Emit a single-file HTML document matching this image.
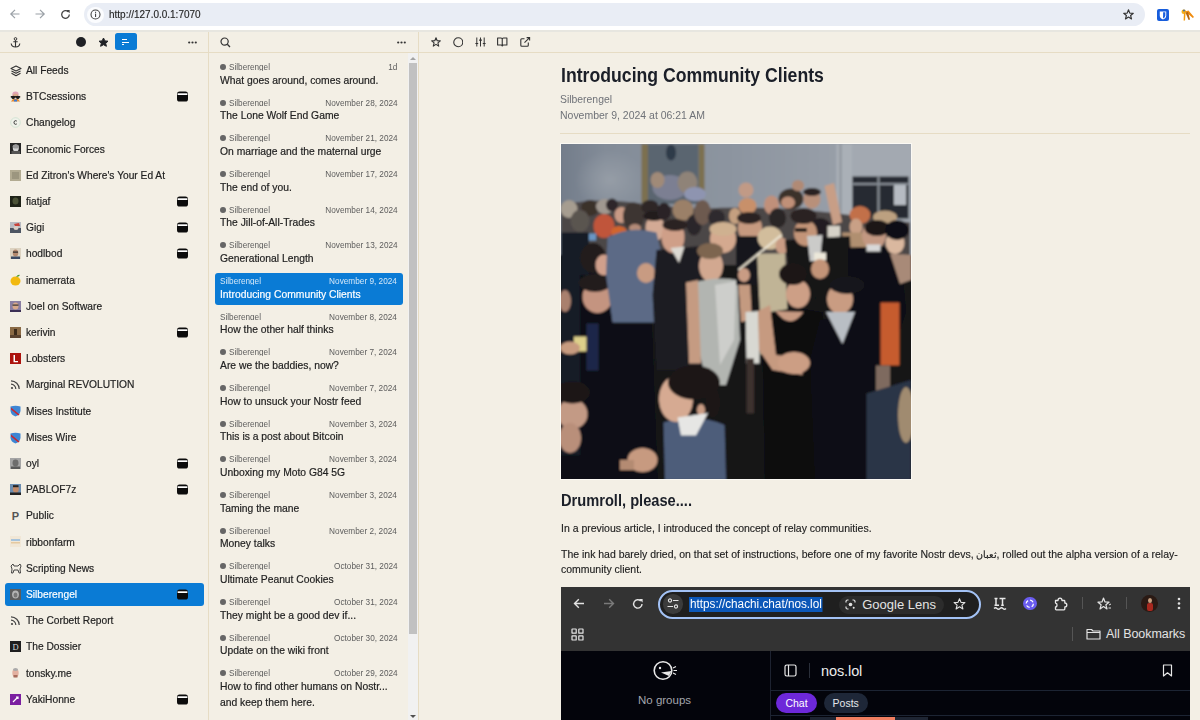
<!DOCTYPE html><html><head><meta charset="utf-8"><style>*{margin:0;padding:0;box-sizing:border-box}
html,body{width:1200px;height:720px;overflow:hidden;background:#f3efe5;font-family:"Liberation Sans",sans-serif}
#chrome{position:absolute;left:0;top:0;width:1200px;height:30px;background:#fff;z-index:5}
#pill{position:absolute;left:83.5px;top:3px;width:1061px;height:23px;border-radius:12px;background:#e9edf5}
#infobg{position:absolute;left:87px;top:6.5px;width:16.5px;height:16.5px;border-radius:50%;background:#fbfcfe}
#url{position:absolute;left:109px;top:7.5px;font-size:10.5px;color:#1f1f1f;-webkit-text-stroke:0.15px #1f1f1f;line-height:13px;white-space:nowrap;transform:scaleX(0.951);transform-origin:0 0}
.ci{position:absolute}
#app{position:absolute;left:0;top:30px;width:1200px;height:690px;background:#f3efe5}
.hline{position:absolute;height:1px;background:#e6dcc4}
.vline{position:absolute;width:1px;background:#e6dcc4}
#side{position:absolute;left:0;top:0;width:208px;height:690px}
.frow{position:absolute;left:5px;width:199px;height:23px;border-radius:3px}
.frow.sel{background:#0a7bd5}
.fic{position:absolute;left:4.5px;top:6px;width:12px;height:12px;line-height:0}
.fname{position:absolute;left:20.5px;top:4.3px;font-size:11.2px;line-height:14px;color:#222;white-space:nowrap;transform:scaleX(0.913);transform-origin:0 0;-webkit-text-stroke:0.2px #222}
.frow.sel .fname{color:#fff;-webkit-text-stroke:0.2px #fff}
.badge{position:absolute;left:172px;top:6px;line-height:0}
#mid{position:absolute;left:209px;top:0;width:209px;height:690px}
.item{position:absolute;left:5.5px;width:188.5px;height:32.5px;border-radius:3px}
.item.sel{background:#0a7bd5}
.dot{position:absolute;left:5.3px;top:5.6px;width:5.8px;height:5.8px;border-radius:50%;background:#666}
.auth{position:absolute;left:14.25px;top:2.5px;height:9.6px;overflow:hidden;font-size:8.5px;line-height:12px;color:#5c5c5c;white-space:nowrap;transform:scaleX(0.964);transform-origin:0 0}
.auth.nd{left:5.25px}
.date{position:absolute;right:5.75px;top:2.5px;font-size:8.5px;line-height:12px;color:#5c5c5c;white-space:nowrap;transform:scaleX(0.97);transform-origin:100% 0}
.ttl{position:absolute;left:5.25px;top:14px;font-size:11px;line-height:15.75px;color:#222;white-space:nowrap;transform:scaleX(0.939);transform-origin:0 0;-webkit-text-stroke:0.2px #222}
.item.sel .auth,.item.sel .date{color:#d5e8f8}
.item.sel .ttl{color:#fff;-webkit-text-stroke:0.2px #fff}
#sb{position:absolute;left:199px;top:23px;width:10px;height:667px;background:#f1f1f1}
#thumb{position:absolute;left:1px;top:10px;width:8px;height:571px;background:#c1c1c1}
#sbup{position:absolute;left:2px;top:4px;width:0;height:0;border-left:3px solid transparent;border-right:3px solid transparent;border-bottom:3px solid #a3a3a3}
#sbdn{position:absolute;left:2px;top:662px;width:0;height:0;border-left:3px solid transparent;border-right:3px solid transparent;border-top:3px solid #505050}
#main{position:absolute;left:419px;top:0;width:781px;height:690px;overflow:hidden}
#atitle{position:absolute;left:141.5px;top:33px;font-size:20px;line-height:24px;font-weight:bold;color:#1b1f28;white-space:nowrap;transform:scaleX(0.883);transform-origin:0 0}
#aauth{position:absolute;left:141px;top:62.3px;font-size:11px;line-height:14px;color:#6f7278;white-space:nowrap;transform:scaleX(0.945);transform-origin:0 0}
#adate{position:absolute;left:141px;top:77.8px;font-size:11px;line-height:14px;color:#6f7278;white-space:nowrap;transform:scaleX(0.952);transform-origin:0 0}
#pframe{position:absolute;left:141px;top:113px;width:352px;height:337px;background:#fbf9f4}
#h2{position:absolute;left:141.5px;top:461px;font-size:16px;line-height:19px;font-weight:bold;color:#1b1f28;white-space:nowrap;transform:scaleX(0.915);transform-origin:0 0}
.para{position:absolute;left:141.5px;font-size:11px;line-height:15.5px;color:#222;white-space:nowrap;transform:scaleX(0.953);transform-origin:0 0;-webkit-text-stroke:0.15px #222}
#shot{position:absolute;left:142px;top:557.3px;width:629px;height:140px;background:#03040b;overflow:hidden}
#stool{position:absolute;left:0;top:0;width:629px;height:63.5px;background:#333333}
#omni{position:absolute;left:97.3px;top:2.5px;width:322.4px;height:29.2px;border-radius:15px;border:2px solid #a3c2f5;background:#1f1f1f}
#urlsel{position:absolute;left:128px;top:9.5px;height:15px;padding:0 1px;background:#0b57b8;color:#fff;font-size:12.5px;line-height:15px;white-space:nowrap;transform:scaleX(0.94);transform-origin:0 0}
#lens{position:absolute;left:277.7px;top:8.4px;width:105.7px;height:18px;border-radius:9px;background:#2c2c2c;color:#e3e3e3}
#lens span{position:absolute;left:23.5px;top:1px;font-size:13px;line-height:16px;white-space:nowrap;transform:scaleX(1.0);transform-origin:0 0}
#allbm{position:absolute;left:545px;top:40px;font-size:12.5px;line-height:15px;color:#e3e3e3;white-space:nowrap;letter-spacing:-0.05px}
#sdark{position:absolute;left:0;top:63.5px;width:629px;height:80px;background:#03040b}
#nogroups{position:absolute;left:77px;top:105.5px;font-size:11.5px;line-height:14px;color:#a3a6ad;white-space:nowrap}
#noslol{position:absolute;left:260px;top:75.5px;font-size:14.5px;line-height:17px;color:#ececec;white-space:nowrap;letter-spacing:-0.1px}
#chat{position:absolute;left:215px;top:106px;width:41px;height:20px;border-radius:10px;background:#6d28d9;color:#fff;font-size:10.5px;line-height:20px;text-align:center}
#posts{position:absolute;left:262.5px;top:106px;width:44.5px;height:20px;border-radius:10px;background:#1e2738;color:#e5e7eb;font-size:10.5px;line-height:20px;text-align:center}

#cline{position:absolute;left:0;top:30px;width:1200px;height:1.5px;background:#e7e6e0}</style></head><body>
<div id="chrome"><div id="cline"></div>
<svg class="ci" style="left:9px;top:8px" width="12" height="12" viewBox="0 0 12 12"><path d="M10.5 6H2 M6 1.8 L1.8 6 L6 10.2" fill="none" stroke="#9aa0a6" stroke-width="1.2"/></svg>
<svg class="ci" style="left:34px;top:8px" width="12" height="12" viewBox="0 0 12 12"><path d="M1.5 6H10 M6 1.8 L10.2 6 L6 10.2" fill="none" stroke="#9aa0a6" stroke-width="1.2"/></svg>
<svg class="ci" style="left:59.5px;top:8.5px" width="11" height="11" viewBox="0 0 11 11"><path d="M9.3 5.5 A3.8 3.8 0 1 1 8.2 2.8" fill="none" stroke="#444" stroke-width="1.3"/><path d="M6.3 1 L9.6 1 L9.6 4.3Z" fill="#444"/></svg>
<div id="pill"></div><div id="infobg"></div>
<svg class="ci" style="left:89.5px;top:9px" width="11" height="11" viewBox="0 0 11 11"><circle cx="5.5" cy="5.5" r="4.5" fill="none" stroke="#444" stroke-width="1.1"/><rect x="5" y="4.6" width="1.1" height="3.4" fill="#444"/><rect x="5" y="2.8" width="1.1" height="1.1" fill="#444"/></svg>
<div id="url">http://127.0.0.1:7070</div>
<svg class="ci" style="left:1122.5px;top:9px" width="11" height="11" viewBox="0 0 11 11"><path d="M5.5 0.8 L6.8 4.1 L10.3 4.3 L7.6 6.5 L8.5 9.9 L5.5 8 L2.5 9.9 L3.4 6.5 L0.7 4.3 L4.2 4.1Z" fill="none" stroke="#333" stroke-width="1.15" stroke-linejoin="round"/></svg>
<svg class="ci" style="left:1157px;top:8.8px" width="12" height="12" viewBox="0 0 13 13"><rect x="0" y="0" width="13" height="13" rx="2.2" fill="#175ddc"/><path d="M3 2.8 H10 V7 Q10 10 6.5 11.5 Q3 10 3 7Z" fill="#fff"/><path d="M6.6 3.6 H9 V7 Q9 9.3 6.6 10.4Z" fill="#175ddc"/></svg>
<svg class="ci" style="left:1181px;top:8.5px" width="14" height="12" viewBox="0 0 14 12"><circle cx="2.8" cy="2.8" r="2.3" fill="#f5b01a"/><path d="M3 3 L2.6 11.5 L4 11.5 L4.5 4Z" fill="#f39a0a"/><path d="M4 2.5 L7.5 1.5 L13 8 L11.8 9 L6 4Z" fill="#f08c10"/><path d="M4.5 3.5 L7 3 L9 10.5 L7.6 11 Z" fill="#b5650d"/><circle cx="3" cy="1.5" r="1.1" fill="#5a7390"/></svg>
</div>

<div id="app">
<div id="side">
<svg class="ci" style="left:9.5px;top:6.5px" width="11" height="11" viewBox="0 0 11 11"><circle cx="5.5" cy="1.9" r="1.3" fill="none" stroke="#333" stroke-width="1"/><path d="M5.5 3.2 V10 M3.3 4.8 H7.7 M1.2 6.5 Q1.5 10 5.5 10 Q9.5 10 9.8 6.5" fill="none" stroke="#333" stroke-width="1.1"/></svg>
<div style="position:absolute;left:76px;top:7px;width:10px;height:10px;border-radius:50%;background:#1f2125"></div>
<svg class="ci" style="left:97.5px;top:7px" width="11" height="10" viewBox="0 0 11 10"><path d="M5.5 1 L6.9 3.9 L10 4.2 L7.7 6.3 L8.4 9.3 L5.5 7.7 L2.6 9.3 L3.3 6.3 L1 4.2 L4.1 3.9Z" fill="#1f2125" stroke="#1f2125" stroke-width="1" stroke-linejoin="round"/></svg>
<div style="position:absolute;left:115px;top:3.3px;width:22px;height:16.7px;border-radius:2.5px;background:#0a7bd5"></div>
<div style="position:absolute;left:121.7px;top:9px;width:5.4px;height:1.1px;background:#fff"></div>
<div style="position:absolute;left:121.7px;top:11.6px;width:7.6px;height:1.1px;background:#fff"></div>
<div style="position:absolute;left:121.7px;top:14.2px;width:2.8px;height:1.1px;background:#fff"></div>
<svg class="ci" style="left:187.5px;top:10.5px" width="9" height="3" viewBox="0 0 9 3"><circle cx="1.2" cy="1.5" r="1.1" fill="#333"/><circle cx="4.5" cy="1.5" r="1.1" fill="#333"/><circle cx="7.8" cy="1.5" r="1.1" fill="#333"/></svg>
<div class="hline" style="left:0;top:21.5px;width:208px"></div>
<div class="vline" style="left:208px;top:0;height:690px"></div>

<div class="frow" style="top:28.70px"><span class="fic"><svg width="12" height="12" viewBox="0 0 12 12"><path d="M6 1 L11 3.5 L6 6 L1 3.5Z M1.5 6 L6 8.3 L10.5 6 M1.5 8.3 L6 10.7 L10.5 8.3" fill="none" stroke="#333" stroke-width="1.1" stroke-linejoin="round"/></svg></span><span class="fname">All Feeds</span></div>
<div class="frow" style="top:54.90px"><span class="fic"><svg width="11" height="11" viewBox="0 0 11 11"><rect width="11" height="11" fill="#f2ede2"/><circle cx="5.5" cy="3.8" r="3.2" fill="#e0a2b8"/><ellipse cx="5.5" cy="5" rx="2.6" ry="2.4" fill="#d9a78a"/><rect x="0.8" y="5" width="9.4" height="1.6" fill="#222"/><circle cx="3.2" cy="6.4" r="1.7" fill="#1b1b1b"/><circle cx="7.8" cy="6.4" r="1.7" fill="#1b1b1b"/><path d="M1 10.5 L3 8 L8 8 L10 10.5Z" fill="#e58a2e"/><rect x="4" y="8.5" width="3" height="2" fill="#3a7bd5"/></svg></span><span class="fname">BTCsessions</span><span class="badge"><svg width="11" height="11" viewBox="0 0 11 11"><rect x="0" y="0.5" width="11" height="10" rx="2.6" fill="#0c0c0c"/><rect x="0.6" y="2.3" width="9.8" height="1.7" fill="#fff"/></svg></span></div>
<div class="frow" style="top:81.10px"><span class="fic"><svg width="11" height="11" viewBox="0 0 11 11"><circle cx="5.5" cy="5.5" r="4.8" fill="#f0f2ea" stroke="#cfe3d3" stroke-width="0.9"/><path d="M6.8 4.2 Q6.2 3.6 5.4 3.7 Q4 3.9 4 5.5 Q4 7.1 5.4 7.3 Q6.2 7.4 6.8 6.8" fill="none" stroke="#333" stroke-width="1"/></svg></span><span class="fname">Changelog</span></div>
<div class="frow" style="top:107.30px"><span class="fic"><svg width="11" height="11" viewBox="0 0 11 11"><rect width="11" height="11" fill="#262626"/><ellipse cx="5.8" cy="5" rx="3" ry="3.6" fill="#d5d5d5"/><ellipse cx="5.8" cy="3.4" rx="3.2" ry="2" fill="#9a9a9a"/><rect x="1.5" y="8" width="8.5" height="3" fill="#555"/></svg></span><span class="fname">Economic Forces</span></div>
<div class="frow" style="top:133.50px"><span class="fic"><svg width="11" height="11" viewBox="0 0 11 11"><rect width="11" height="11" fill="#b2ab92"/><rect x="2" y="2" width="7" height="7" fill="#9c967f"/></svg></span><span class="fname">Ed Zitron's Where's Your Ed At</span></div>
<div class="frow" style="top:159.70px"><span class="fic"><svg width="11" height="11" viewBox="0 0 11 11"><rect width="11" height="11" fill="#1f2318"/><ellipse cx="5.5" cy="5" rx="3" ry="3.5" fill="#4b5237"/></svg></span><span class="fname">fiatjaf</span><span class="badge"><svg width="11" height="11" viewBox="0 0 11 11"><rect x="0" y="0.5" width="11" height="10" rx="2.6" fill="#0c0c0c"/><rect x="0.6" y="2.3" width="9.8" height="1.7" fill="#fff"/></svg></span></div>
<div class="frow" style="top:185.90px"><span class="fic"><svg width="11" height="11" viewBox="0 0 11 11"><rect width="11" height="11" fill="#b9bcc2"/><path d="M4 2 L9 1 L10 4 L5 4Z" fill="#c8423a"/><rect x="0" y="6" width="11" height="5" fill="#4d5562"/><ellipse cx="6" cy="6" rx="2.5" ry="2" fill="#d9cfc5"/></svg></span><span class="fname">Gigi</span><span class="badge"><svg width="11" height="11" viewBox="0 0 11 11"><rect x="0" y="0.5" width="11" height="10" rx="2.6" fill="#0c0c0c"/><rect x="0.6" y="2.3" width="9.8" height="1.7" fill="#fff"/></svg></span></div>
<div class="frow" style="top:212.10px"><span class="fic"><svg width="11" height="11" viewBox="0 0 11 11"><rect width="11" height="11" fill="#dcd2c0"/><ellipse cx="5.5" cy="5" rx="2.8" ry="3.5" fill="#b58a6e"/><rect x="3" y="3.5" width="5" height="1.2" fill="#2a2a2a"/><rect x="1" y="8.5" width="9" height="2.5" fill="#3b4a63"/></svg></span><span class="fname">hodlbod</span><span class="badge"><svg width="11" height="11" viewBox="0 0 11 11"><rect x="0" y="0.5" width="11" height="10" rx="2.6" fill="#0c0c0c"/><rect x="0.6" y="2.3" width="9.8" height="1.7" fill="#fff"/></svg></span></div>
<div class="frow" style="top:238.30px"><span class="fic"><svg width="12" height="12" viewBox="0 0 12 12"><ellipse cx="5.5" cy="7" rx="5" ry="4.5" fill="#f2b90f"/><path d="M6 3 Q8 0 10 1 Q9 3 6 3Z" fill="#4a9a2a"/></svg></span><span class="fname">inamerrata</span></div>
<div class="frow" style="top:264.50px"><span class="fic"><svg width="11" height="11" viewBox="0 0 11 11"><rect width="11" height="11" fill="#8a7fa3"/><ellipse cx="5.5" cy="5" rx="3" ry="3.6" fill="#d8a88a"/><rect x="2.5" y="3.5" width="6" height="1.2" fill="#333"/><rect x="0" y="9" width="11" height="2" fill="#3b2f55"/></svg></span><span class="fname">Joel on Software</span></div>
<div class="frow" style="top:290.70px"><span class="fic"><svg width="11" height="11" viewBox="0 0 11 11"><rect width="11" height="11" fill="#8a6a45"/><rect x="4" y="2" width="3" height="7" fill="#3b2a1a"/><rect x="0" y="8" width="11" height="3" fill="#5a4330"/></svg></span><span class="fname">kerivin</span><span class="badge"><svg width="11" height="11" viewBox="0 0 11 11"><rect x="0" y="0.5" width="11" height="10" rx="2.6" fill="#0c0c0c"/><rect x="0.6" y="2.3" width="9.8" height="1.7" fill="#fff"/></svg></span></div>
<div class="frow" style="top:316.90px"><span class="fic"><svg width="11" height="11" viewBox="0 0 11 11"><rect width="11" height="11" fill="#ac130d"/><path d="M3.5 2 H5 V8 H8 V9.3 H3.5Z" fill="#fff"/></svg></span><span class="fname">Lobsters</span></div>
<div class="frow" style="top:343.10px"><span class="fic"><svg width="11" height="11" viewBox="0 0 11 11"><circle cx="2" cy="9" r="1.1" fill="#444"/><path d="M1 5.2 A4.8 4.8 0 0 1 5.8 10 M1 1.8 A8.2 8.2 0 0 1 9.2 10" fill="none" stroke="#444" stroke-width="1.2"/></svg></span><span class="fname">Marginal REVOLUTION</span></div>
<div class="frow" style="top:369.30px"><span class="fic"><svg width="11" height="12" viewBox="0 0 11 12"><path d="M0.5 1.5 Q5.5 0 10.5 1.5 L10.5 6 Q10 10 5.5 11.5 Q1 10 0.5 6Z" fill="#3d86d4"/><path d="M1 2.5 L9.5 9.5 L8.3 10.5 L1 4.5Z" fill="#c8262e"/></svg></span><span class="fname">Mises Institute</span></div>
<div class="frow" style="top:395.50px"><span class="fic"><svg width="11" height="12" viewBox="0 0 11 12"><path d="M0.5 1.5 Q5.5 0 10.5 1.5 L10.5 6 Q10 10 5.5 11.5 Q1 10 0.5 6Z" fill="#3d86d4"/><path d="M1 2.5 L9.5 9.5 L8.3 10.5 L1 4.5Z" fill="#c8262e"/></svg></span><span class="fname">Mises Wire</span></div>
<div class="frow" style="top:421.70px"><span class="fic"><svg width="11" height="11" viewBox="0 0 11 11"><rect width="11" height="11" fill="#a5a5a5"/><ellipse cx="5.5" cy="5" rx="3" ry="3.4" fill="#6d6d6d"/><rect x="1" y="8.5" width="9" height="2.5" fill="#5a5a5a"/></svg></span><span class="fname">oyl</span><span class="badge"><svg width="11" height="11" viewBox="0 0 11 11"><rect x="0" y="0.5" width="11" height="10" rx="2.6" fill="#0c0c0c"/><rect x="0.6" y="2.3" width="9.8" height="1.7" fill="#fff"/></svg></span></div>
<div class="frow" style="top:447.90px"><span class="fic"><svg width="11" height="11" viewBox="0 0 11 11"><rect width="11" height="11" fill="#6b8db0"/><ellipse cx="5.8" cy="5" rx="3" ry="3.8" fill="#c08a6a"/><rect x="3" y="1.2" width="5.5" height="2" fill="#222"/><rect x="0" y="8.5" width="11" height="2.5" fill="#222"/></svg></span><span class="fname">PABLOF7z</span><span class="badge"><svg width="11" height="11" viewBox="0 0 11 11"><rect x="0" y="0.5" width="11" height="10" rx="2.6" fill="#0c0c0c"/><rect x="0.6" y="2.3" width="9.8" height="1.7" fill="#fff"/></svg></span></div>
<div class="frow" style="top:474.10px"><span class="fic"><svg width="11" height="11" viewBox="0 0 11 11"><text x="5.5" y="10" font-size="11" font-weight="bold" text-anchor="middle" fill="#555" font-family="Liberation Sans">P</text></svg></span><span class="fname">Public</span></div>
<div class="frow" style="top:500.30px"><span class="fic"><svg width="11" height="11" viewBox="0 0 11 11"><rect width="11" height="11" fill="#f1e7d6"/><rect x="1" y="3" width="9" height="2" fill="#a7c3db"/><rect x="1" y="6" width="9" height="1.5" fill="#e5c9a0"/></svg></span><span class="fname">ribbonfarm</span></div>
<div class="frow" style="top:526.50px"><span class="fic"><svg width="12" height="11" viewBox="0 0 12 11"><path d="M1 3 L3 1 L4 3 L8 3 L10 1 L11 3 L10 6 L10.5 10 L9 10 L8 7 L4 7 L3 10 L1.5 10 L2 6Z" fill="none" stroke="#333" stroke-width="0.9"/></svg></span><span class="fname">Scripting News</span></div>
<div class="frow sel" style="top:552.70px"><span class="fic"><svg width="11" height="11" viewBox="0 0 11 11"><rect width="11" height="11" fill="#5c5c5c"/><ellipse cx="5.5" cy="5.5" rx="3.4" ry="4" fill="#b5b5b5"/><ellipse cx="5.5" cy="6" rx="2" ry="2.5" fill="#777"/></svg></span><span class="fname">Silberengel</span><span class="badge"><svg width="11" height="11" viewBox="0 0 11 11"><rect x="0" y="0.5" width="11" height="10" rx="2.6" fill="#0c0c0c"/><rect x="0.6" y="2.3" width="9.8" height="1.7" fill="#fff"/></svg></span></div>
<div class="frow" style="top:578.90px"><span class="fic"><svg width="11" height="11" viewBox="0 0 11 11"><circle cx="2" cy="9" r="1.1" fill="#444"/><path d="M1 5.2 A4.8 4.8 0 0 1 5.8 10 M1 1.8 A8.2 8.2 0 0 1 9.2 10" fill="none" stroke="#444" stroke-width="1.2"/></svg></span><span class="fname">The Corbett Report</span></div>
<div class="frow" style="top:605.10px"><span class="fic"><svg width="11" height="11" viewBox="0 0 11 11"><rect width="11" height="11" fill="#1e1e1e"/><text x="5.5" y="9" font-size="8.5" text-anchor="middle" fill="#d8d8d8" font-family="Liberation Serif">D</text></svg></span><span class="fname">The Dossier</span></div>
<div class="frow" style="top:631.30px"><span class="fic"><svg width="11" height="11" viewBox="0 0 11 11"><ellipse cx="5.5" cy="6" rx="3.2" ry="4.2" fill="#e3b0a0"/><ellipse cx="5.5" cy="2.4" rx="2.5" ry="1.5" fill="#aaa"/><rect x="3.5" y="8" width="4" height="2.5" fill="#a66c5c"/></svg></span><span class="fname">tonsky.me</span></div>
<div class="frow" style="top:657.50px"><span class="fic"><svg width="11" height="11" viewBox="0 0 11 11"><rect width="11" height="11" fill="#7b1fa0"/><path d="M3 8 L8 3 M6 3 H8 V5" stroke="#fff" stroke-width="1.2" fill="none"/></svg></span><span class="fname">YakiHonne</span><span class="badge"><svg width="11" height="11" viewBox="0 0 11 11"><rect x="0" y="0.5" width="11" height="10" rx="2.6" fill="#0c0c0c"/><rect x="0.6" y="2.3" width="9.8" height="1.7" fill="#fff"/></svg></span></div>
</div>
<div id="mid">
<svg class="ci" style="left:10.5px;top:6.5px" width="11" height="11" viewBox="0 0 11 11"><circle cx="4.6" cy="4.6" r="3.6" fill="none" stroke="#333" stroke-width="1.2"/><path d="M7.3 7.3 L10 10" stroke="#333" stroke-width="1.3"/></svg>
<svg class="ci" style="left:188px;top:10.5px" width="9" height="3" viewBox="0 0 9 3"><circle cx="1.2" cy="1.5" r="1.1" fill="#333"/><circle cx="4.5" cy="1.5" r="1.1" fill="#333"/><circle cx="7.8" cy="1.5" r="1.1" fill="#333"/></svg>
<div class="hline" style="left:0;top:21.5px;width:209px"></div>
<div class="vline" style="left:209px;top:0;height:690px"></div>

<div class="item" style="top:28.50px"><span class="dot"></span><span class="auth">Silberengel</span><span class="date">1d</span><div class="ttl">What goes around, comes around.</div></div>
<div class="item" style="top:64.17px"><span class="dot"></span><span class="auth">Silberengel</span><span class="date">November 28, 2024</span><div class="ttl">The Lone Wolf End Game</div></div>
<div class="item" style="top:99.84px"><span class="dot"></span><span class="auth">Silberengel</span><span class="date">November 21, 2024</span><div class="ttl">On marriage and the maternal urge</div></div>
<div class="item" style="top:135.51px"><span class="dot"></span><span class="auth">Silberengel</span><span class="date">November 17, 2024</span><div class="ttl">The end of you.</div></div>
<div class="item" style="top:171.18px"><span class="dot"></span><span class="auth">Silberengel</span><span class="date">November 14, 2024</span><div class="ttl">The Jill-of-All-Trades</div></div>
<div class="item" style="top:206.85px"><span class="dot"></span><span class="auth">Silberengel</span><span class="date">November 13, 2024</span><div class="ttl">Generational Length</div></div>
<div class="item sel" style="top:242.52px"><span class="auth nd">Silberengel</span><span class="date">November 9, 2024</span><div class="ttl">Introducing Community Clients</div></div>
<div class="item" style="top:278.19px"><span class="auth nd">Silberengel</span><span class="date">November 8, 2024</span><div class="ttl">How the other half thinks</div></div>
<div class="item" style="top:313.86px"><span class="dot"></span><span class="auth">Silberengel</span><span class="date">November 7, 2024</span><div class="ttl">Are we the baddies, now?</div></div>
<div class="item" style="top:349.53px"><span class="dot"></span><span class="auth">Silberengel</span><span class="date">November 7, 2024</span><div class="ttl">How to unsuck your Nostr feed</div></div>
<div class="item" style="top:385.20px"><span class="dot"></span><span class="auth">Silberengel</span><span class="date">November 3, 2024</span><div class="ttl">This is a post about Bitcoin</div></div>
<div class="item" style="top:420.87px"><span class="dot"></span><span class="auth">Silberengel</span><span class="date">November 3, 2024</span><div class="ttl">Unboxing my Moto G84 5G</div></div>
<div class="item" style="top:456.54px"><span class="dot"></span><span class="auth">Silberengel</span><span class="date">November 3, 2024</span><div class="ttl">Taming the mane</div></div>
<div class="item" style="top:492.21px"><span class="dot"></span><span class="auth">Silberengel</span><span class="date">November 2, 2024</span><div class="ttl">Money talks</div></div>
<div class="item" style="top:527.88px"><span class="dot"></span><span class="auth">Silberengel</span><span class="date">October 31, 2024</span><div class="ttl">Ultimate Peanut Cookies</div></div>
<div class="item" style="top:563.55px"><span class="dot"></span><span class="auth">Silberengel</span><span class="date">October 31, 2024</span><div class="ttl">They might be a good dev if...</div></div>
<div class="item" style="top:599.22px"><span class="dot"></span><span class="auth">Silberengel</span><span class="date">October 30, 2024</span><div class="ttl">Update on the wiki front</div></div>
<div class="item" style="top:634.89px"><span class="dot"></span><span class="auth">Silberengel</span><span class="date">October 29, 2024</span><div class="ttl">How to find other humans on Nostr...<br>and keep them here.</div></div>
<div id="sb"><div id="sbup"></div><div id="thumb"></div><div id="sbdn"></div></div>
</div>
<div id="main">
<svg class="ci" style="left:11.5px;top:7px" width="10" height="10" viewBox="0 0 10 10"><path d="M5 0.8 L6.2 3.7 L9.3 3.9 L6.9 5.9 L7.7 9.1 L5 7.4 L2.3 9.1 L3.1 5.9 L0.7 3.9 L3.8 3.7Z" fill="none" stroke="#333" stroke-width="1.1" stroke-linejoin="round"/></svg>
<svg class="ci" style="left:33.5px;top:7px" width="10.5" height="10.5" viewBox="0 0 10.5 10.5"><circle cx="5.25" cy="5.25" r="4.5" fill="none" stroke="#333" stroke-width="1.1"/></svg>
<svg class="ci" style="left:55.5px;top:7px" width="11" height="10" viewBox="0 0 11 10"><path d="M1.8 0.5V9.5 M5.5 0.5V9.5 M9.2 0.5V9.5" stroke="#333" stroke-width="1"/><path d="M0.4 6.5H3.2 M4.1 3.2H6.9 M7.8 6.5H10.6" stroke="#333" stroke-width="1.2"/></svg>
<svg class="ci" style="left:78px;top:7px" width="10.5" height="10" viewBox="0 0 10.5 10"><path d="M0.6 1 H4 Q5.25 1 5.25 2.2 V9 Q5.25 8 4 8 H0.6Z M9.9 1 H6.5 Q5.25 1 5.25 2.2 V9 Q5.25 8 6.5 8 H9.9Z" fill="none" stroke="#333" stroke-width="1.1" stroke-linejoin="round"/></svg>
<svg class="ci" style="left:101px;top:7px" width="10.5" height="10" viewBox="0 0 10.5 10"><path d="M4.5 1.8 H1.8 Q0.8 1.8 0.8 2.8 V8.3 Q0.8 9.3 1.8 9.3 H7.3 Q8.3 9.3 8.3 8.3 V5.6 M4.5 5.6 L9.6 0.6 M6.6 0.6 H9.6 V3.6" fill="none" stroke="#333" stroke-width="1.1"/></svg>
<div class="hline" style="left:0;top:21.5px;width:781px"></div>
<div id="atitle">Introducing Community Clients</div>
<div id="aauth">Silberengel</div>
<div id="adate">November 9, 2024 at 06:21 AM</div>
<div class="hline" style="left:141px;top:103px;width:630px"></div>
<div id="pframe"></div>
<svg width="350" height="335" viewBox="22 28 700 670" preserveAspectRatio="none" style="position:absolute;left:142px;top:114px;display:block">
<defs>
<linearGradient id="wall" x1="0" y1="0" x2="1" y2="0"><stop offset="0" stop-color="#6f7987"/><stop offset="0.15" stop-color="#838c98"/><stop offset="0.5" stop-color="#8d95a0"/><stop offset="1" stop-color="#a0a6ae"/></linearGradient>
<radialGradient id="fog" cx="0.5" cy="0.5" r="0.5"><stop offset="0" stop-color="#9aa1aa" stop-opacity="0.8"/><stop offset="1" stop-color="#9aa1aa" stop-opacity="0"/></radialGradient>
<filter id="bl" x="-5%" y="-5%" width="110%" height="110%"><feGaussianBlur stdDeviation="2.6"/></filter>
<clipPath id="pc"><rect x="22" y="28" width="700" height="670"/></clipPath>
</defs>
<g clip-path="url(#pc)"><g filter="url(#bl)">
<rect x="0" y="0" width="740" height="720" fill="#121319"/>
<rect x="0" y="0" width="740" height="250" fill="url(#wall)"/>
<ellipse cx="120" cy="100" rx="70" ry="60" fill="url(#fog)"/>
<!-- painting -->
<rect x="183" y="28" width="13" height="118" fill="#7c6f50"/>
<rect x="297" y="28" width="12" height="95" fill="#7c6f50"/>
<rect x="196" y="28" width="101" height="120" fill="#5a6570"/>
<ellipse cx="242" cy="45" rx="10" ry="16" fill="#2f3a48"/>
<ellipse cx="240" cy="115" rx="35" ry="25" fill="#7b7f92"/>
<ellipse cx="275" cy="105" rx="20" ry="22" fill="#8f8378"/>
<ellipse cx="215" cy="100" rx="14" ry="16" fill="#a08a78"/>
<ellipse cx="290" cy="128" rx="22" ry="14" fill="#8e94b0"/>
<!-- pillar and window -->
<rect x="573" y="28" width="32" height="190" fill="#aab0b7"/>
<rect x="578" y="28" width="6" height="190" fill="#959ba3"/>
<rect x="605" y="28" width="117" height="70" fill="#a3a9b1"/>
<rect x="605" y="93" width="112" height="84" fill="#262b31"/>
<rect x="655" y="93" width="4" height="84" fill="#8f959d"/>
<rect x="605" y="106" width="112" height="4" fill="#868c94"/>
<rect x="688" y="110" width="24" height="40" fill="#b6bbc2"/>
<!-- crowd band background -->
<path d="M22 150 Q100 132 200 150 L300 158 Q420 150 560 165 L720 185 L720 270 L22 270Z" fill="#4c4646"/>
<!-- heads, left quadrant -->
<ellipse cx="38" cy="158" rx="17" ry="18" fill="#a69d90"/>
<ellipse cx="80" cy="156" rx="18" ry="16" fill="#3b302c"/>
<ellipse cx="110" cy="153" rx="18" ry="15" fill="#a09890"/>
<ellipse cx="124" cy="150" rx="12" ry="13" fill="#2e2729"/>
<ellipse cx="60" cy="182" rx="19" ry="22" fill="#5a5450"/>
<ellipse cx="108" cy="192" rx="21" ry="24" fill="#c0553a"/>
<ellipse cx="138" cy="204" rx="16" ry="12" fill="#d0652f"/>
<ellipse cx="143" cy="170" rx="14" ry="16" fill="#c89a85"/>
<ellipse cx="167" cy="173" rx="21" ry="28" fill="#3d3530"/>
<ellipse cx="170" cy="196" rx="12" ry="8" fill="#b48b78"/>
<ellipse cx="200" cy="154" rx="18" ry="14" fill="#2d2628"/>
<ellipse cx="210" cy="196" rx="19" ry="26" fill="#d3aa95"/>
<ellipse cx="208" cy="172" rx="22" ry="10" fill="#231d1f"/>
<ellipse cx="228" cy="163" rx="14" ry="18" fill="#2a2426"/>
<ellipse cx="266" cy="160" rx="21" ry="21" fill="#9b8068"/>
<ellipse cx="288" cy="190" rx="15" ry="21" fill="#2c2729"/>
<ellipse cx="305" cy="165" rx="17" ry="25" fill="#6d5a50"/>
<ellipse cx="333" cy="175" rx="17" ry="16" fill="#2f2a2e"/>
<ellipse cx="346" cy="218" rx="26" ry="28" fill="#d4a98f"/>
<ellipse cx="346" cy="198" rx="27" ry="14" fill="#cfb190"/>
<ellipse cx="370" cy="172" rx="12" ry="16" fill="#c4a080"/>
<!-- heads, right quadrant -->
<ellipse cx="392" cy="120" rx="15" ry="15" fill="#c19a86"/>
<ellipse cx="395" cy="152" rx="18" ry="16" fill="#c8906a"/>
<ellipse cx="443" cy="150" rx="15" ry="19" fill="#c0907a"/>
<ellipse cx="482" cy="138" rx="25" ry="21" fill="#3a302c"/>
<ellipse cx="476" cy="145" rx="14" ry="12" fill="#c09078"/>
<ellipse cx="496" cy="111" rx="12" ry="11" fill="#b08a74"/>
<ellipse cx="524" cy="138" rx="17" ry="19" fill="#b8907a"/>
<ellipse cx="524" cy="124" rx="18" ry="8" fill="#2a2321"/>
<ellipse cx="455" cy="176" rx="17" ry="20" fill="#2b2526"/>
<path d="M549 112 L568 106 L584 184 L566 190Z" fill="#c89e86"/>
<ellipse cx="400" cy="196" rx="24" ry="28" fill="#c69a80"/>
<ellipse cx="398" cy="176" rx="24" ry="12" fill="#2b2420"/>
<ellipse cx="540" cy="200" rx="24" ry="24" fill="#231e20"/>
<rect x="555" y="192" width="25" height="45" fill="#d6d2c8"/>
<ellipse cx="620" cy="170" rx="21" ry="18" fill="#c27048"/>
<ellipse cx="612" cy="194" rx="13" ry="17" fill="#c9a086"/>
<path d="M584 205 L633 205 L636 252 L590 252Z" fill="#b08f70"/>
<ellipse cx="670" cy="174" rx="24" ry="13" fill="#bca080"/>
<!-- left dark figures -->
<rect x="22" y="205" width="56" height="500" fill="#161a28"/>
<path d="M60 290 L200 295 L215 700 L60 700Z" fill="#101117"/>
<ellipse cx="86" cy="256" rx="26" ry="30" fill="#221c1e"/>
<ellipse cx="108" cy="270" rx="17" ry="21" fill="#d0a08c"/>
<ellipse cx="95" cy="334" rx="30" ry="32" fill="#c49480"/>
<ellipse cx="90" cy="306" rx="32" ry="18" fill="#241c1e"/>
<rect x="78" y="207" width="14" height="14" fill="#6a96c4"/>
<rect x="73" y="387" width="24" height="94" fill="#1b2548"/>
<ellipse cx="30" cy="342" rx="12" ry="22" fill="#a9806e"/>
<rect x="48" y="413" width="25" height="30" fill="#ddd08a"/>
<ellipse cx="40" cy="436" rx="20" ry="13" fill="#c89c80"/>
<ellipse cx="45" cy="568" rx="30" ry="30" fill="#c39a85"/>
<ellipse cx="40" cy="616" rx="22" ry="30" fill="#b98f7a"/>
<ellipse cx="45" cy="525" rx="34" ry="22" fill="#1f1919"/>
<rect x="22" y="650" width="110" height="50" fill="#0f0e14"/>
<!-- gray-blue suit back -->
<path d="M115 215 Q160 190 213 205 L228 270 L222 385 L125 385 L112 290Z" fill="#5c6a86"/>
<ellipse cx="192" cy="286" rx="18" ry="20" fill="#c89b82"/>
<!-- center man dark suit -->
<path d="M213 240 L302 232 L310 330 L298 480 L213 480 L205 330Z" fill="#1b1a22"/>
<ellipse cx="246" cy="214" rx="23" ry="32" fill="#cf9f88"/>
<ellipse cx="250" cy="190" rx="25" ry="12" fill="#2b2420"/>
<path d="M241 236 L269 233 L258 266Z" fill="#dcd9d2"/>
<!-- Audrey -->
<ellipse cx="322" cy="272" rx="24" ry="32" fill="#d2a890"/>
<ellipse cx="320" cy="242" rx="26" ry="16" fill="#7d6550"/>
<path d="M288 305 Q335 292 375 300 L380 420 L352 510 L315 510 L292 420Z" fill="#b2b5b1"/>
<path d="M330 310 L372 302 L368 420 L340 470Z" fill="#cdcecb"/>
<path d="M272 305 L296 300 L302 467 L278 467Z" fill="#c59b82"/>
<path d="M374 268 L398 266 L404 380 L382 384Z" fill="#c49a80"/>
<path d="M391 364 L419 362 L419 467 L393 467Z" fill="#d8d8d2"/>
<rect x="393" y="457" width="15" height="110" fill="#3e322e"/>
<path d="M372 212 L425 212 L428 310 L372 310Z" fill="#16161b"/>
<!-- gold jacket woman -->
<ellipse cx="440" cy="216" rx="25" ry="23" fill="#d2bd9c"/>
<ellipse cx="464" cy="232" rx="13" ry="16" fill="#c99c84"/>
<path d="M414 247 L470 247 L475 364 L420 370Z" fill="#c0b496"/>
<path d="M416 364 L440 360 L445 440 L420 450Z" fill="#b0a688"/>
<!-- stick -->
<path d="M377 280 L463 210" stroke="#ece5d3" stroke-width="4"/>
<ellipse cx="388" cy="290" rx="12" ry="14" fill="#c99c84"/>
<!-- sunglasses man -->
<path d="M470 220 L600 212 L605 330 L482 340Z" fill="#121318"/>
<ellipse cx="511" cy="206" rx="23" ry="26" fill="#c39478"/>
<ellipse cx="507" cy="172" rx="26" ry="16" fill="#2b2420"/>
<rect x="490" y="196" width="24" height="8" fill="#151212"/>
<path d="M514 212 L545 210 L540 262 L520 262Z" fill="#cbcbc9"/>
<rect x="528" y="245" width="24" height="16" fill="#ece8da"/>
<ellipse cx="540" cy="278" rx="18" ry="20" fill="#c39478"/>
<!-- right man back -->
<ellipse cx="648" cy="210" rx="24" ry="28" fill="#c39882"/>
<ellipse cx="654" cy="196" rx="25" ry="16" fill="#1a1718"/>
<path d="M596 235 L700 232 L712 364 L660 520 L596 420Z" fill="#0f1015"/>
<rect x="633" y="229" width="28" height="14" fill="#d8d8d8"/>
<!-- asian woman -->
<ellipse cx="690" cy="226" rx="19" ry="22" fill="#dab89f"/>
<ellipse cx="694" cy="200" rx="24" ry="20" fill="#111014"/>
<path d="M680 247 L722 250 L722 300 L700 308Z" fill="#a88a78"/>
<!-- black dress woman -->
<ellipse cx="496" cy="328" rx="24" ry="28" fill="#cd9f86"/>
<ellipse cx="486" cy="288" rx="28" ry="22" fill="#1c1718"/>
<path d="M420 370 Q480 350 545 365 L550 420 L545 700 L430 700 L425 430Z" fill="#0e0d11"/>
<path d="M451 362 Q480 402 507 364Z" fill="#c79a82"/>
<path d="M416 362 L440 350 L452 450 L505 455 L505 490 L445 480 L418 440Z" fill="#c69a80"/>
<ellipse cx="488" cy="466" rx="32" ry="22" fill="#cc9e84"/>
<!-- right man -->
<ellipse cx="580" cy="338" rx="26" ry="30" fill="#c99c82"/>
<ellipse cx="594" cy="310" rx="35" ry="18" fill="#16141a"/>
<path d="M540 380 L630 372 L655 440 L650 700 L530 700 L520 460Z" fill="#0e0f14"/>
<path d="M552 364 L610 364 L585 428Z" fill="#b9bec4"/>
<!-- far right bottom -->
<rect x="661" y="345" width="38" height="126" fill="#c65c2e"/>
<rect x="652" y="471" width="28" height="75" fill="#7e6a5e"/>
<path d="M633 527 L722 500 L722 700 L633 700Z" fill="#2c3646"/>
<ellipse cx="712" cy="570" rx="16" ry="56" fill="#a08b70"/>
<!-- bottom blue suit man -->
<path d="M227 585 Q290 565 349 590 L352 700 L230 700Z" fill="#4d5d7a"/>
<ellipse cx="252" cy="538" rx="34" ry="46" fill="#d6aa92"/>
<ellipse cx="288" cy="505" rx="52" ry="34" fill="#1c1715"/>
<ellipse cx="326" cy="545" rx="15" ry="30" fill="#1c1715"/>
<ellipse cx="302" cy="560" rx="8" ry="12" fill="#c99c84"/>
<path d="M255 575 L316 566 L292 611 L262 611Z" fill="#e6e6e4"/>
<ellipse cx="185" cy="660" rx="30" ry="24" fill="#c79a80"/>
<rect x="140" y="660" width="28" height="20" fill="#b48b72"/>
</g></g>
</svg>
<div id="h2">Drumroll, please....</div>
<div class="para" style="top:490.5px">In a previous article, I introduced the concept of relay communities.</div>
<div class="para" style="top:516.5px">The ink had barely dried, on that set of instructions, before one of my favorite Nostr devs, <span style="font-size:10px;letter-spacing:0">ثعبان</span>, rolled out the alpha version of a relay-<br>community client.</div>
<div id="shot">
 <div id="stool"></div>
 <svg class="ci" style="left:12px;top:11px" width="12" height="11" viewBox="0 0 12 11"><path d="M11 5.5H1.5 M5.8 1.2 L1.5 5.5 L5.8 9.8" fill="none" stroke="#e3e3e3" stroke-width="1.4"/></svg>
 <svg class="ci" style="left:41.5px;top:11px" width="12" height="11" viewBox="0 0 12 11"><path d="M1 5.5H10.5 M6.2 1.2 L10.5 5.5 L6.2 9.8" fill="none" stroke="#7a7a7a" stroke-width="1.4"/></svg>
 <svg class="ci" style="left:71px;top:10.5px" width="12" height="12" viewBox="0 0 12 12"><path d="M10 6 A4.2 4.2 0 1 1 8.8 3" fill="none" stroke="#e3e3e3" stroke-width="1.4"/><path d="M7 1 L10.6 1 L10.6 4.6Z" fill="#e3e3e3"/></svg>
 <div id="omni"></div>
 <div style="position:absolute;left:102px;top:7px;width:19.5px;height:19.5px;border-radius:50%;background:#3b3b3b"></div>
 <svg class="ci" style="left:106px;top:11px" width="12" height="11" viewBox="0 0 12 11"><circle cx="3" cy="2.5" r="1.6" fill="none" stroke="#e3e3e3" stroke-width="1.1"/><path d="M6 2.5H11.5 M0.5 8.5H6" stroke="#e3e3e3" stroke-width="1.1"/><circle cx="9" cy="8.5" r="1.6" fill="none" stroke="#e3e3e3" stroke-width="1.1"/></svg>
 <div id="urlsel">https://chachi.chat/nos.lol</div>
 <div id="lens"><svg style="position:absolute;left:6px;top:3.5px" width="11" height="11" viewBox="0 0 11 11"><path d="M1 3.5V2.5Q1 1 2.5 1H3.5 M7.5 1H8.5Q10 1 10 2.5V3.5 M1 7.5V8.5Q1 10 2.5 10H3.5" fill="none" stroke="#e3e3e3" stroke-width="1.2"/><circle cx="5.5" cy="5.5" r="1.8" fill="#e3e3e3"/><circle cx="8.7" cy="8.7" r="1" fill="#e3e3e3"/></svg><span>Google Lens</span></div>
 <svg class="ci" style="left:392px;top:10.5px" width="13" height="12" viewBox="0 0 13 12"><path d="M6.5 0.8 L8 4.4 L11.9 4.6 L8.9 7.1 L9.9 11 L6.5 8.8 L3.1 11 L4.1 7.1 L1.1 4.6 L5 4.4Z" fill="none" stroke="#e3e3e3" stroke-width="1.1" stroke-linejoin="round"/></svg>
 <svg class="ci" style="left:432px;top:9.5px" width="14" height="14" viewBox="0 0 14 14"><path d="M1.5 1.5H4.5 M3 1.5V8.2 M1.5 8.2H6 M6.5 1.5H12.5 M9.5 1.5V8.2 M8.2 8.2H10.8" stroke="#e8e8e8" stroke-width="1.5" fill="none"/><path d="M1 11.5 Q2.5 10 4 11.5 T7 11.5 T10 11.5 T13 11.5" stroke="#e8e8e8" stroke-width="1.3" fill="none"/></svg>
 <div style="position:absolute;left:462px;top:9.5px;width:13.5px;height:13.5px;border-radius:50%;background:#6a5cf0"></div>
 <svg class="ci" style="left:462px;top:9.5px" width="13.5" height="13.5" viewBox="0 0 13.5 13.5"><circle cx="6.75" cy="6.75" r="3.6" fill="none" stroke="#fff" stroke-width="1.3" stroke-dasharray="3.5 2.15"/></svg>
 <svg class="ci" style="left:491.5px;top:9.5px" width="15" height="14" viewBox="0 0 15 14"><path d="M2.5 3.5 H5 Q5 1.2 7 1.2 Q9 1.2 9 3.5 H11 Q11.8 3.5 11.8 4.3 V6 Q13.8 6 13.8 8 Q13.8 10 11.8 10 V12 Q11.8 12.8 11 12.8 H3.3 Q2.5 12.8 2.5 12 V10 Q4 10 4 8 Q4 6 2.5 6Z" fill="none" stroke="#e8e8e8" stroke-width="1.3" stroke-linejoin="round"/></svg>
 <div style="position:absolute;left:521px;top:10px;width:1px;height:12px;background:#555"></div>
 <svg class="ci" style="left:535.5px;top:9.5px" width="15" height="14" viewBox="0 0 15 14"><path d="M6.5 1 L8 5 L12 5.2 L8.9 7.8 L10 12 L6.5 9.6 L3 12 L4.1 7.8 L1 5.2 L5 5Z" fill="none" stroke="#e3e3e3" stroke-width="1.2" stroke-linejoin="round"/><path d="M12 8 L14 7 M11.5 11 L14 11" stroke="#e3e3e3" stroke-width="1"/></svg>
 <div style="position:absolute;left:564.5px;top:10px;width:1px;height:12px;background:#555"></div>
 <div style="position:absolute;left:580px;top:8px;width:16.5px;height:16.5px;border-radius:50%;background:#2a1a14"></div>
 <div style="position:absolute;left:585.5px;top:16px;width:6px;height:8px;border-radius:2px;background:#a8281e"></div><div style="position:absolute;left:587px;top:11px;width:4px;height:5px;border-radius:50%;background:#c9a080"></div>
 <svg class="ci" style="left:615.5px;top:10px" width="4" height="13" viewBox="0 0 4 13"><circle cx="2" cy="2" r="1.3" fill="#e3e3e3"/><circle cx="2" cy="6.5" r="1.3" fill="#e3e3e3"/><circle cx="2" cy="11" r="1.3" fill="#e3e3e3"/></svg>
 <svg class="ci" style="left:10px;top:41px" width="13" height="13" viewBox="0 0 13 13"><rect x="1" y="1" width="4.2" height="4.2" rx="0.3" fill="none" stroke="#e3e3e3" stroke-width="1.2"/><rect x="7.8" y="1" width="4.2" height="4.2" rx="0.3" fill="none" stroke="#e3e3e3" stroke-width="1.2"/><rect x="1" y="7.8" width="4.2" height="4.2" rx="0.3" fill="none" stroke="#e3e3e3" stroke-width="1.2"/><rect x="7.8" y="7.8" width="4.2" height="4.2" rx="0.3" fill="none" stroke="#e3e3e3" stroke-width="1.2"/></svg>
 <div style="position:absolute;left:510.5px;top:40px;width:1px;height:14px;background:#555"></div>
 <svg class="ci" style="left:525px;top:41px" width="15" height="12" viewBox="0 0 15 12"><path d="M1 1.5H5.5L7 3H14V11H1Z" fill="none" stroke="#e3e3e3" stroke-width="1.2" stroke-linejoin="round"/><path d="M1 4.5H14" stroke="#e3e3e3" stroke-width="1"/></svg>
 <div id="allbm">All Bookmarks</div>
 <div id="sdark"></div>
 <svg class="ci" style="left:92px;top:73px" width="25" height="21" viewBox="0 0 25 21"><circle cx="10" cy="10.5" r="8.8" fill="none" stroke="#e8e8e8" stroke-width="1.6"/><circle cx="7" cy="8" r="1.2" fill="#e8e8e8"/><path d="M8 12.5 L18.5 11 L16 16Z" fill="#e8e8e8"/><path d="M20 8 L23 6.5 M20.5 10.5 L24 10.5 M20 13 L23 14.5" stroke="#e8e8e8" stroke-width="1.1"/></svg>
 <div id="nogroups">No groups</div>
 <div style="position:absolute;left:208.5px;top:64px;width:1px;height:69px;background:#1d2230"></div>
 <svg class="ci" style="left:223px;top:77px" width="13" height="13" viewBox="0 0 13 13"><rect x="1" y="1" width="11" height="11" rx="1.8" fill="none" stroke="#e8e8e8" stroke-width="1.2"/><path d="M4.5 1V12" stroke="#e8e8e8" stroke-width="1.2"/></svg>
 <div style="position:absolute;left:248px;top:76px;width:1px;height:15px;background:#2a2f3a"></div>
 <div id="noslol">nos.lol</div>
 <svg class="ci" style="left:601px;top:77px" width="11" height="13" viewBox="0 0 11 13"><path d="M1.5 1H9.5V12L5.5 8.8L1.5 12Z" fill="none" stroke="#e8e8e8" stroke-width="1.2" stroke-linejoin="round"/></svg>
 <div style="position:absolute;left:209px;top:102.5px;width:420px;height:1px;background:#1c2433"></div>
 <div id="chat">Chat</div><div id="posts">Posts</div>
 <div style="position:absolute;left:209px;top:128px;width:420px;height:1px;background:#1c2433"></div>
 <div style="position:absolute;left:249px;top:129.5px;width:26px;height:4px;background:#1e2533"></div>
 <div style="position:absolute;left:275px;top:129.5px;width:58.5px;height:4px;background:#f07e60"></div>
 <div style="position:absolute;left:333.5px;top:129.5px;width:33px;height:4px;background:#1e2533"></div>
</div>
</div>

</div></body></html>
